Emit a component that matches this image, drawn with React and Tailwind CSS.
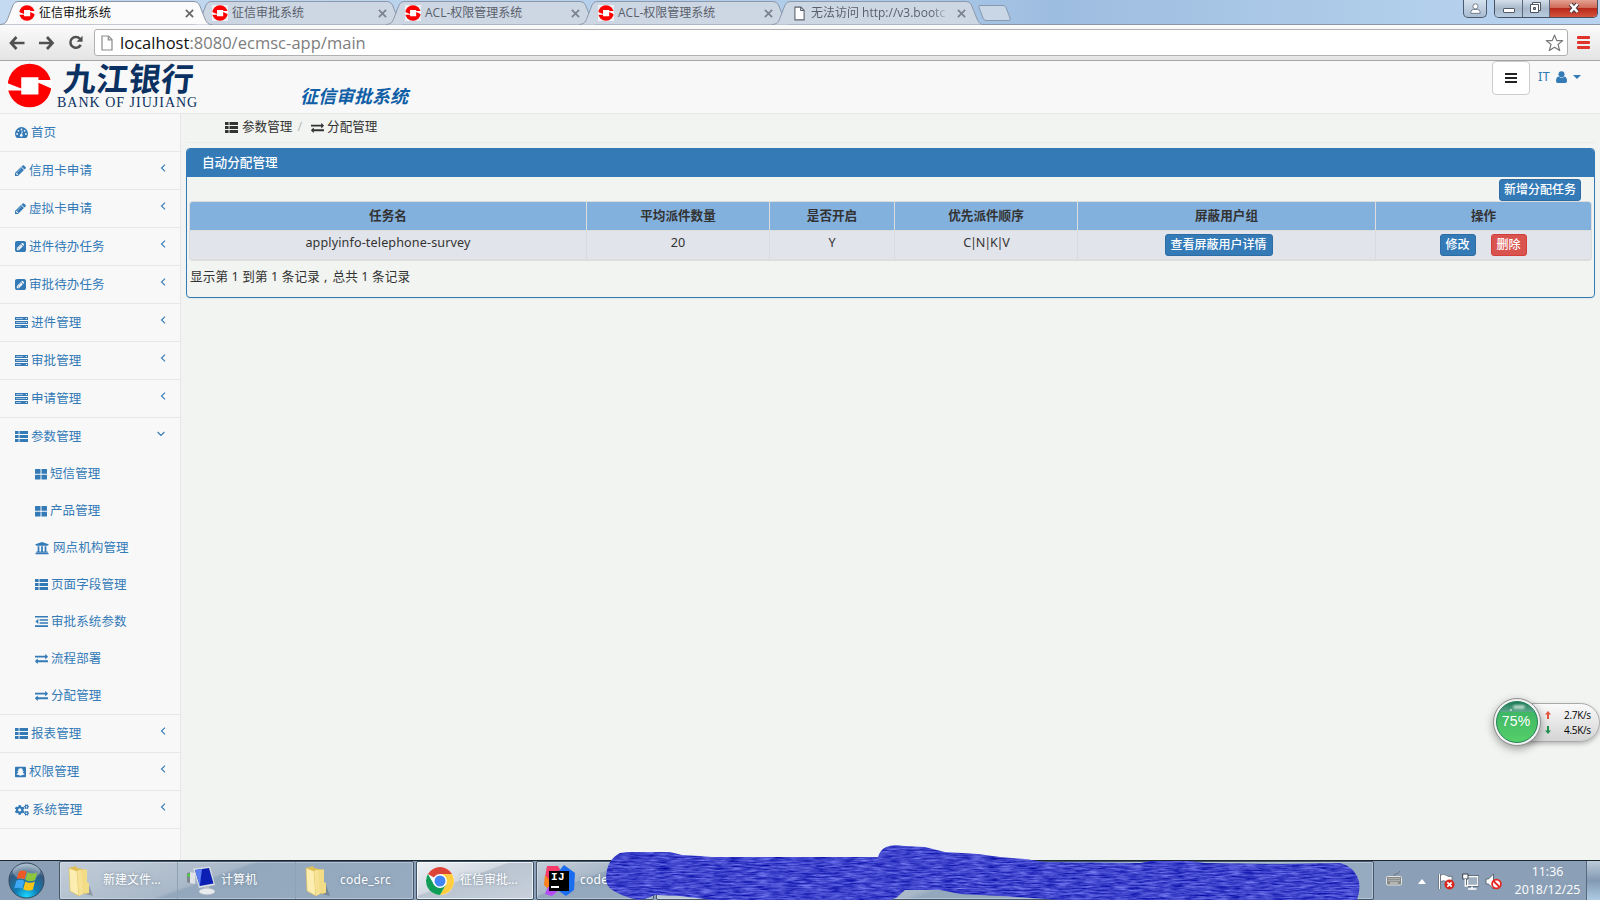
import React from "react";
import { FaUniversity, FaSnapchatSquare, FaCogs } from "react-icons/fa";

const cjk = "font-['Noto_Sans','Noto_Sans_CJK_SC',sans-serif]";

function Emblem({ className }) {
  return (
    <svg viewBox="0 0 134 136" className={className}>
      <circle cx="67" cy="68" r="66" fill="#f00" />
      <path d="M42 43H94V51H136V78L94 60V95H42V83H-2V60L42 77Z" fill="#fff" />
    </svg>
  );
}

/* ---------- icons ---------- */
function Glyph({ d, box = "0 0 1792 1792", className }) {
  return (
    <svg viewBox={box} className={className} fill="currentColor">
      <path d={d} />
    </svg>
  );
}
const PENCIL =
  "M491 1536l91-91-235-235-91 91v107h128v128h107zm523-928q0-22-22-22-10 0-17 7l-542 542q-7 7-7 17 0 22 22 22 10 0 17-7l542-542q7-7 7-17zm-54-192l416 416-832 832h-416v-416zm683 96q0 53-37 90l-166 166-416-416 166-165q36-38 90-38 53 0 91 38l235 234q37 39 37 91z";
const PENCIL_SQ =
  "M404 1108l152 152-52 52h-56v-96h-96v-56zm414-390q14 13-3 30l-291 291q-17 17-30 3-14-13 3-30l291-291q17-17 30-3zm-274 690l544-544-288-288-544 544v288h288zm608-608l92-92q28-28 28-68t-28-68l-152-152q-28-28-68-28t-68 28l-92 92zm384-384v960q0 119-84.5 203.5t-203.5 84.5h-960q-119 0-203.5-84.5t-84.5-203.5v-960q0-119 84.5-203.5t203.5-84.5h960q119 0 203.5 84.5t84.5 203.5z";
const EXCHANGE =
  "M1792 1184v192q0 13-9.500 22.500t-22.500 9.500h-1376v192q0 13-9.500 22.500t-22.500 9.500q-12 0-24-10l-319-320q-9-9-9-22 0-14 9-23l320-320q9-9 23-9 13 0 22.500 9.500t9.500 22.500v192h1376q13 0 22.500 9.500t9.500 22.500zm0-544q0 14-9 23l-320 320q-9 9-23 9-13 0-22.500-9.500t-9.500-22.500v-192h-1376q-13 0-22.500-9.500t-9.500-22.500v-192q0-13 9.500-22.500t22.500-9.500h1376v-192q0-14 9-23t23-9q12 0 24 10l319 319q9 9 9 23z";

function Icon({ name }) {
  const s = "block h-[13px] w-[13px] shrink-0";
  switch (name) {
    case "dash":
      return (
        <svg viewBox="0 0 13 13" className={s}>
          <path d="M1.700 12A6.500 6.500 0 1 1 11.300 12Z" fill="currentColor" />
          <g fill="#f8f8f8">
            <circle cx="2.100" cy="8" r=".9" />
            <circle cx="3.400" cy="4.800" r=".9" />
            <circle cx="6.500" cy="3.500" r=".9" />
            <circle cx="9.600" cy="4.800" r=".9" />
            <circle cx="10.900" cy="8" r=".9" />
            <circle cx="6.300" cy="9.400" r="1.400" />
            <path d="M6 8.500L6.900 5L7.700 5.200L6.900 9Z" />
          </g>
        </svg>
      );
    case "pencil":
      return <Glyph d={PENCIL} box="128 128 1536 1536" className="block h-[11px] w-[11px] shrink-0" />;
    case "pencilsq":
      return <Glyph d={PENCIL_SQ} box="0 128 1536 1536" className="block h-[11px] w-[11px] shrink-0" />;
    case "server":
      return (
        <svg viewBox="0 0 13 13" className={s} fill="currentColor">
          <path d="M0 1h13v3H0zM0 5h13v3H0zM0 9h13v3H0z" />
          <g fill="#f8f8f8">
            <path d="M1 2h7v1H1zM1 6h9v1H1zM1 10h5v1H1z" opacity=".55" />
            <rect x="10.700" y="2" width="1.200" height="1" />
            <rect x="10.700" y="6" width="1.200" height="1" />
            <rect x="10.700" y="10" width="1.200" height="1" />
          </g>
        </svg>
      );
    case "thlist":
      return (
        <svg viewBox="0 0 13 13" className={s} fill="currentColor">
          <path d="M0 1h3.600v3.100H0zM4.500 1H13v3.100H4.500zM0 5h3.600v3.100H0zM4.500 5H13v3.100H4.500zM0 9h3.600v3H0zM4.500 9H13v3H4.500z" />
        </svg>
      );
    case "thlarge":
      return (
        <svg viewBox="0 0 12 12" className="block h-3 w-3 shrink-0" fill="currentColor">
          <rect y="1" width="5.500" height="4.700" rx=".5" />
          <rect x="6.500" y="1" width="5.500" height="4.700" rx=".5" />
          <rect y="6.700" width="5.500" height="4.700" rx=".5" />
          <rect x="6.500" y="6.700" width="5.500" height="4.700" rx=".5" />
        </svg>
      );
    case "bank":
      return <FaUniversity className="block h-[14px] w-[14px] shrink-0" />;
    case "outdent":
      return (
        <svg viewBox="0 0 13 13" className={s} fill="currentColor">
          <path d="M0 1h13v1.600H0zM4.600 4.200H13v1.500H4.600zM4.600 7.200H13v1.500H4.600zM0 10.300h13v1.600H0zM3.300 3.700v5.400L.4 6.400z" />
        </svg>
      );
    case "exchange":
      return <Glyph d={EXCHANGE} className={s} />;
    case "snap":
      return <FaSnapchatSquare className="block h-[12px] w-[11px] shrink-0" preserveAspectRatio="none" />;
    case "cogs":
      return <FaCogs className="block h-[14px] w-[14px] shrink-0" />;
    default:
      return null;
  }
}

/* ---------- browser chrome ---------- */
function PageIcon({ className }) {
  return (
    <svg viewBox="0 0 12 16" className={className} fill="#fff" stroke="currentColor" strokeWidth="1.200">
      <path d="M1 1H7.500L11 4.500V15H1Z" />
      <path d="M7.300 1V4.800H11" fill="none" />
    </svg>
  );
}

function Tab({ title, active, page, cut }) {
  return (
    <div className={"relative h-6 w-[193px] shrink-0 " + (active ? "z-10" : "")}>
      <svg viewBox="0 0 213 25" className="absolute left-0 top-0 h-[25px] w-[213px]">
        <path
          d="M0 24.500C5 24 6 23 8 18L13 5Q14.500 1.500 18 1.500H194Q198 1.500 199.500 5L205 19C207 23 208 24.500 212 24.500"
          fill={active ? "#fbfbfb" : "#cdd7e4"}
          stroke={active ? "#8c97a6" : "#8b99ab"}
          strokeWidth="1"
        />
      </svg>
      <div className="relative flex h-6 items-center pl-[19px] pt-[2px]">
        {page ? (
          <PageIcon className="ml-[3px] mr-[2px] h-[15px] w-[11px] shrink-0 text-[#5c6370]" />
        ) : (
          <span className={active ? "flex h-4 w-4 shrink-0" : "flex h-4 w-4 shrink-0 bg-[#edf1f6]"}>
            <Emblem className="h-4 w-4" />
          </span>
        )}
        <span
          className={
            "ml-[4px] h-5 w-[139px] shrink-0 whitespace-nowrap font-['Open_Sans','Noto_Sans_CJK_SC',sans-serif] text-[12px] leading-5 " +
            (active ? "text-[#111]" : "text-[#59606b]") +
            (cut ? " [mask-image:linear-gradient(90deg,#000_120px,transparent_139px)]" : "")
          }
        >
          {title}
        </span>
        <svg viewBox="0 0 10 10" className="ml-[7px] h-[9px] w-[9px] shrink-0" stroke={active ? "#666" : "#7a818b"} strokeWidth="1.900">
          <path d="M1 1L9 9M9 1L1 9" />
        </svg>
      </div>
    </div>
  );
}

function Browser() {
  return (
    <>
      <div className="flex h-6 bg-[linear-gradient(90deg,#c4daf1,#aecbe9_55%,#9dbde0_66%,#b3cfeb_90%,#b9d4f0)]">
        <Tab title="征信审批系统" active />
        <Tab title="征信审批系统" />
        <Tab title="ACL-权限管理系统" />
        <Tab title="ACL-权限管理系统" />
        <Tab title="无法访问 http://v3.bootc" page cut />
        <svg viewBox="0 0 34 24" className="ml-[13px] h-6 w-[34px]">
          <path d="M2 5.500H25Q27 5.500 28 7.500L32 18Q33 20.500 31 20.500H8Q6 20.500 5 18L1 7.500Q.3 5.500 2 5.500Z" fill="#c9d6e6" stroke="#8799b1" />
        </svg>
        <div className="ml-auto flex h-[18px] pr-[2px]">
          <div className="mr-[7px] flex w-[24px] items-center justify-center rounded-b-[5px] border border-t-0 border-[#4c5a6c] bg-linear-to-b from-[#d5e1ee] to-[#a8bbd1]">
            <svg viewBox="0 0 12 12" className="h-[11px] w-[11px]" fill="#fff" stroke="#6b7686">
              <path d="M1 11.300V9.500Q1.500 7 4 7H8Q10.500 7 11 9.500V11.300Z" />
              <circle cx="6" cy="3.700" r="2.800" />
            </svg>
          </div>
          <div className="flex overflow-hidden rounded-b-[5px] border border-t-0 border-[#46505f]">
            <div className="flex w-[28px] items-end justify-center border-r border-[#5b6779] bg-linear-to-b from-[#d3dfeb] via-[#a9b9cb] to-[#b7cbe0] pb-1">
              <div className="h-[5px] w-3 rounded-[1px] border border-[#535b68] bg-white" />
            </div>
            <div className="flex w-[27px] items-center justify-center border-r border-[#5b6779] bg-linear-to-b from-[#d3dfeb] via-[#a9b9cb] to-[#b7cbe0] pb-[2px] pr-[2px]">
              <svg viewBox="0 0 13 13" className="h-[13px] w-[13px]" fill="#fff" stroke="#4d5562">
                <path d="M3.500 1.500H11.500V9.500H3.500Z" />
                <path d="M1.500 3.500H9.500V11.500H1.500Z" />
                <path d="M4.500 6.500H6.500V8.500H4.500Z" fill="#8fa0b5" />
              </svg>
            </div>
            <div className="flex w-[47px] items-center justify-center bg-[linear-gradient(180deg,#e3a193,#d06a58_45%,#b9281a_50%,#d4553c_100%)] pb-[2px]">
              <svg viewBox="0 0 14 12" className="h-[12px] w-[14px]">
                <path d="M3.500 2L10.500 10M10.500 2L3.500 10" stroke="#4e3a44" strokeWidth="4.600" />
                <path d="M3.500 2L10.500 10M10.500 2L3.500 10" stroke="#fff" strokeWidth="2.600" />
              </svg>
            </div>
          </div>
        </div>
      </div>
      <div className="flex h-[37px] items-center border-b border-t border-b-[#a5a5a5] border-t-[#8c97a6] bg-linear-to-b from-[#fbfbfb] to-[#e4e4e4] pl-[9px]">
        <svg viewBox="0 0 16 14" className="h-[14px] w-4" fill="none" stroke="#505050" strokeWidth="2.700">
          <path d="M15.500 7H2.500M7.500 1L2 7L7.500 13" />
        </svg>
        <svg viewBox="0 0 16 14" className="ml-[14px] h-[14px] w-4" fill="none" stroke="#505050" strokeWidth="2.700">
          <path d="M0 7H13M8 1L13.500 7L8 13" />
        </svg>
        <svg viewBox="0 0 16 16" className="ml-[13px] h-[15px] w-4" fill="none" stroke="#505050" strokeWidth="2.700">
          <path d="M13 10.500A5.800 5.800 0 1 1 12.200 4" />
          <path d="M15 .8V7.300H8.500Z" fill="#505050" stroke="none" />
        </svg>
        <div className="ml-[10px] flex h-[27px] w-[1474px] items-center rounded-[3px] border border-[#b0b0b0] bg-white pl-[6px] pr-[3px]">
          <PageIcon className="h-[16px] w-[12px] text-[#8b8b8b]" />
          <span className="ml-[7px] font-['Open_Sans',sans-serif] text-[16.500px] leading-6 tracking-[0.03px] text-[#7d7d7d]">
            <span className="text-[#111]">localhost</span>:8080/ecmsc-app/main
          </span>
          <svg viewBox="0 0 20 19" className="ml-auto h-[18px] w-[19px]" fill="#fff" stroke="#777" strokeWidth="1.300" strokeLinejoin="round">
            <path d="M10 1.200L12.400 7H18.600L13.700 11L15.500 17.500L10 13.900L4.500 17.500L6.300 11L1.400 7H7.600Z" />
          </svg>
        </div>
        <div className="ml-[9px] flex w-[13px] flex-col gap-[2px]">
          <i className="h-[3px] rounded-[1px] bg-[#e0332b]" />
          <i className="h-[3px] rounded-[1px] bg-[#e0332b]" />
          <i className="h-[3px] rounded-[1px] bg-[#e0332b]" />
        </div>
      </div>
    </>
  );
}

/* ---------- page ---------- */
function PageHeader() {
  return (
    <header className="flex h-[53px] shrink-0 border-b border-[#e7e7e7] bg-[#f8f8f8] pl-[7px]">
      <Emblem className="mt-[2px] h-[45px] w-[45px]" />
      <div className="ml-[5px] flex w-[150px] flex-col text-[#0a3161]">
        <span className="ml-[7px] mt-[-2px] h-[36px] -skew-x-6 whitespace-nowrap font-['Noto_Sans_CJK_SC',sans-serif] text-[32.500px] font-bold leading-[36px]">
          九江银行
        </span>
        <span className="mt-px h-[14px] whitespace-nowrap font-['Liberation_Serif',serif] text-[14px] leading-[14px] tracking-[1px]">
          BANK OF JIUJIANG
        </span>
      </div>
      <h1 className="ml-[93px] mt-[23px] whitespace-nowrap text-[18px] font-bold italic leading-6 text-[#0f5ea6]">征信审批系统</h1>
      <div className="ml-auto flex">
        <button className="flex h-[34px] w-[38px] items-center justify-center rounded-[4px] border border-[#ccc] bg-white">
          <svg viewBox="0 0 12 10" className="h-[10px] w-[12px]" fill="#222">
            <path d="M0 0h12v2H0zM0 4h12v2H0zM0 8h12v2H0z" />
          </svg>
        </button>
        <div className="ml-[8px] mr-[19px] flex h-[31px] items-center text-[13px] text-[#337ab7]">
          <span className="w-[13px]">IT</span>
          <svg viewBox="0 0 11 12" className="ml-[5px] h-[12px] w-[11px]" fill="currentColor">
            <circle cx="5.500" cy="3.200" r="3" />
            <path d="M2.600 5.600Q5.500 8 8.400 5.600Q11 6.400 11 10Q11 12 9.200 12H1.800Q0 12 0 10Q0 6.400 2.600 5.600Z" />
          </svg>
          <svg viewBox="0 0 8 4" className="ml-[6px] h-1 w-2" fill="currentColor">
            <path d="M0 0H8L4 4Z" />
          </svg>
        </div>
      </div>
    </header>
  );
}

const TOP = [
  ["dash", "首页", 0],
  ["pencil", "信用卡申请", 1],
  ["pencil", "虚拟卡申请", 1],
  ["pencilsq", "进件待办任务", 1],
  ["pencilsq", "审批待办任务", 1],
  ["server", "进件管理", 1],
  ["server", "审批管理", 1],
  ["server", "申请管理", 1],
];
const SUB = [
  ["thlarge", "短信管理"],
  ["thlarge", "产品管理"],
  ["bank", "网点机构管理"],
  ["thlist", "页面字段管理"],
  ["outdent", "审批系统参数"],
  ["exchange", "流程部署"],
  ["exchange", "分配管理"],
];
const BOTTOM = [
  ["thlist", "报表管理", 1],
  ["snap", "权限管理", 1],
  ["cogs", "系统管理", 1],
];

function NavRow({ icon, label, arrow, open }) {
  return (
    <div className="flex h-[37px] items-center pl-[15px] pr-[13px]">
      <Icon name={icon} />
      <span className="ml-[3px]">{label}</span>
      {arrow ? (
        <svg
          viewBox="0 0 8 8"
          className={"ml-auto mb-[6px] h-2 w-2 " + (open ? "mr-[2px] -rotate-90" : "")}
          fill="none"
          stroke="currentColor"
          strokeWidth="1.100"
        >
          <path d="M6 .6L2.500 4L6 7.400" />
        </svg>
      ) : null}
    </div>
  );
}

function Sidebar() {
  return (
    <nav className="h-full w-[181px] shrink-0 border-r border-[#e7e7e7] bg-[#f8f8f8] text-[12.500px] leading-5 tracking-[0.1px] text-[#337ab7]">
      {TOP.map(([i, l, a]) => (
        <div key={l} className="border-b border-[#e7e7e7]">
          <NavRow icon={i} label={l} arrow={a} />
        </div>
      ))}
      <div className="border-b border-[#e7e7e7]">
        <NavRow icon="thlist" label="参数管理" arrow open />
        {SUB.map(([i, l]) => (
          <div key={l} className="flex h-[37px] items-center pl-[35px]">
            <Icon name={i} />
            <span className={i === "bank" ? "ml-[4px]" : "ml-[3px]"}>{l}</span>
          </div>
        ))}
      </div>
      {BOTTOM.map(([i, l, a]) => (
        <div key={l} className="border-b border-[#e7e7e7]">
          <NavRow icon={i} label={l} arrow={a} />
        </div>
      ))}
    </nav>
  );
}

function Btn({ children, className }) {
  return (
    <button className={"flex h-[22px] items-center justify-center whitespace-nowrap rounded-[3px] border text-[12px] font-medium leading-[18px] text-white " + className}>
      {children}
    </button>
  );
}

function Main() {
  const cols = "grid grid-cols-[396px_183px_125px_183px_298px_1fr]";
  const th = "flex items-center justify-center border-l border-[#ddd] first:border-l-0";
  const td = "flex justify-center border-l border-[#d9dade] pt-[2px] first:border-l-0";
  return (
    <main className="min-w-0 flex-1 pl-[5px] pr-[5px] text-[12.600px] leading-5 text-[#333]">
      <div className="flex h-[29px] items-center border-b border-[#eaedea] pb-[2px] pl-[39px]">
        <Icon name="thlist" />
        <span className="ml-[4px]">参数管理</span>
        <span className="ml-[5px] text-[#bbb]">/</span>
        <span className="ml-[9px] flex items-center">
          <Icon name="exchange" />
          <span className="ml-[3px]">分配管理</span>
        </span>
      </div>
      <section className="mt-[5px] h-[150px] overflow-hidden rounded-[4px] border border-[#337ab7] shadow-[0_1px_1px_rgba(0,0,0,0.05)]">
        <div className="flex h-[28px] items-center bg-[#337ab7] pb-[1px] pl-[15px] font-medium text-white">自动分配管理</div>
        <div className="flex justify-end pr-[13px] pt-[2px]">
          <Btn className="w-[82px] border-[#2e6da4] bg-[#337ab7]">新增分配任务</Btn>
        </div>
        <div className="ml-[2px] mr-[2px] h-[60px] overflow-hidden rounded-[4px] border border-b-2 border-[#ddd] bg-[#e1e4ea]">
          <div className={cols + " h-[28px] bg-[#83b1de] font-bold"}>
            <span className={th}>任务名</span>
            <span className={th}>平均派件数量</span>
            <span className={th}>是否开启</span>
            <span className={th}>优先派件顺序</span>
            <span className={th}>屏蔽用户组</span>
            <span className={th}>操作</span>
          </div>
          <div className={cols + " h-[30px] border-t border-[#ddd]"}>
            <span className={td + " tracking-[0.12px]"}>applyinfo-telephone-survey</span>
            <span className={td}>20</span>
            <span className={td}>Y</span>
            <span className={td + " tracking-[-1.2px]"}>C|N|K|V</span>
            <span className={td + " items-start !pt-[3px]"}>
              <Btn className="mr-[16px] w-[108px] border-[#2e6da4] bg-[#337ab7]">查看屏蔽用户详情</Btn>
            </span>
            <span className={td + " items-start gap-[15px] !pt-[3px]"}>
              <Btn className="w-[36px] border-[#2e6da4] bg-[#337ab7]">修改</Btn>
              <Btn className="mr-px w-[36px] border-[#d43f3a] bg-[#d9534f]">删除</Btn>
            </span>
          </div>
        </div>
        <p className="mt-[6px] h-5 pl-[3px] tracking-[0.12px]">
          显示第 1 到第 1 条记录<span className="inline-block w-[12.600px] pl-[4px] leading-none">,</span>总共 1 条记录
        </p>
      </section>
    </main>
  );
}

/* ---------- floating speed meter ---------- */
function Meter() {
  return (
    <div className="absolute left-[1493px] top-[698px] flex h-[48px] w-[107px] items-center">
      <div className="relative z-10 h-[48px] w-[48px] shrink-0 rounded-full border border-[#8f8f8f] bg-[#f2f2f2] p-[2px] shadow-[0_3px_8px_rgba(0,0,0,0.35)]">
        <div className="relative flex h-full w-full items-center justify-center overflow-hidden rounded-full border border-[#23805a] bg-[linear-gradient(180deg,#1b7a56_0,#5fa98d_25%,#3fb765_26%,#55d068_100%)] pb-[2px] pr-[2px] font-['Liberation_Sans',sans-serif] text-[14px] tracking-[0.2px] text-white">
          75%
          <i className="absolute left-[16px] top-[3px] h-[4px] w-[12px] rounded-full bg-white/60 blur-[1px]" />
          <i className="absolute left-[13px] top-[7px] h-[2px] w-[2px] rounded-full bg-white/70" />
        </div>
      </div>
      <div className="-ml-6 flex h-[39px] w-[83px] flex-col justify-center rounded-r-full border border-[#a9a9a9] bg-linear-to-b from-[#fafafa] to-[#d4d4d4] pl-[27px] pt-px font-['Open_Sans',sans-serif] text-[10px] font-medium leading-[15px] text-black shadow-[0_2px_4px_rgba(0,0,0,0.25)]">
        <div className="flex items-center">
          <svg viewBox="0 0 6 8" className="h-2 w-[6px]" fill="#e2553f">
            <path d="M3 0L6 3.500H4V8H2V3.500H0Z" />
          </svg>
          <span className="ml-[13px] tracking-[-0.3px]">2.7K/s</span>
        </div>
        <div className="flex items-center">
          <svg viewBox="0 0 6 8" className="h-2 w-[6px]" fill="#219150">
            <path d="M3 8L6 4.500H4V0H2V4.500H0Z" />
          </svg>
          <span className="ml-[13px] tracking-[-0.3px]">4.5K/s</span>
        </div>
      </div>
    </div>
  );
}

/* ---------- taskbar ---------- */
function Folder() {
  return (
    <svg viewBox="0 0 26 32" className="h-8 w-[26px]">
      <path d="M14 28L26 31L22 20Z" fill="#000" opacity=".2" />
      <path d="M2 3L9 1L10 3L20 5V29L10 27Z" fill="#e2bf55" />
      <path d="M11 5L20 4.500V17L22 18V28L12 29Z" fill="#f3dc86" />
      <path d="M2 3L10 6L12 31L3 26Z" fill="#fbeeb0" stroke="#d9b956" strokeWidth=".6" />
      <path d="M10 6L14 5L16 29L12 31Z" fill="#f6e294" />
    </svg>
  );
}
function Computer() {
  return (
    <svg viewBox="0 0 32 30" className="h-[30px] w-8">
      <path d="M2 7L6 6V17L2 16.500Z" fill="#7f868f" />
      <path d="M5 6L10 7V18L5 17Z" fill="#dfe3e7" />
      <path d="M2.500 8L5 7.500V10.500L2.500 11Z" fill="#4bd03d" />
      <path d="M8 2.500L25 .5L30 19L14 22Z" fill="#d9dde2" />
      <path d="M10 4L24 2L28.500 17.500L14.800 20Z" fill="#0c1fb4" />
      <path d="M10 4L17 3L14.800 20Z" fill="#5b7fee" />
      <path d="M19 21L24 20L25 25H19Z" fill="#b9bfc6" />
      <ellipse cx="22" cy="25.500" rx="8" ry="3.300" fill="#e8ebee" stroke="#a9b0b8" strokeWidth=".5" />
    </svg>
  );
}
function Chrome() {
  return (
    <svg viewBox="0 0 30 30" className="h-[30px] w-[30px]">
      <circle cx="15" cy="15" r="14" fill="#fff" />
      <path d="M15 15L2.880 8A14 14 0 0 1 27.120 8H15Z" fill="#db4437" />
      <path d="M27.120 8A14 14 0 0 1 15 29L21 18.500L15 8Z" fill="#ffcd40" />
      <path d="M2.880 8A14 14 0 0 0 15 29L21 18.500L9 18.500Z" fill="#0f9d58" />
      <circle cx="15" cy="15" r="7" fill="#fff" />
      <circle cx="15" cy="15" r="5.500" fill="#4285f4" />
    </svg>
  );
}
function Idea() {
  return (
    <div className="relative h-8 w-[32px]">
      <svg viewBox="0 0 32 32" className="absolute inset-0 h-8 w-8">
        <path d="M3 1H14L18 8L8 22L1 12Z" fill="#f83a68" />
        <path d="M1 10L10 20L4 24L0 20Z" fill="#fc801d" />
        <path d="M4 22L16 24L8 31L1 29Z" fill="#b74af7" />
        <path d="M15 6L20 0L31 8L30 25L22 31L12 24Z" fill="#1a6df0" />
      </svg>
      <div className="absolute left-[5px] top-[6px] flex h-[20px] w-[20px] flex-col bg-black pl-[2px] font-['Liberation_Mono',monospace] text-[11px] font-bold leading-[13px] text-white">
        IJ
        <i className="mt-[2px] h-[2px] w-[8px] bg-white" />
      </div>
    </div>
  );
}
function Orb() {
  return (
    <svg viewBox="0 0 38 38" className="h-[37px] w-[37px]">
      <defs>
        <radialGradient id="orb" cx=".5" cy=".95" r=".95">
          <stop offset="0" stopColor="#19d8ff" />
          <stop offset=".35" stopColor="#0f7db5" />
          <stop offset=".75" stopColor="#33597d" />
          <stop offset="1" stopColor="#9db6c9" />
        </radialGradient>
      </defs>
      <circle cx="19" cy="19" r="18" fill="url(#orb)" stroke="#33485c" />
      <ellipse cx="19" cy="10" rx="14" ry="8" fill="#fff" opacity=".28" />
      <path d="M11 10Q15 7.500 19 10L17 18Q13.500 15.500 9 17.500Z" fill="#ee5a24" />
      <path d="M20 10.500Q25 13 30 10.500L28 18.500Q23 21 18 18.500Z" fill="#8cc63f" />
      <path d="M8.700 19Q13 17 16.700 19.500L14.700 27.500Q11 25.500 6.500 27Z" fill="#3fa9f5" />
      <path d="M17.700 20Q22.500 22.500 27.600 20L25.500 28.500Q20 30.500 15.700 28Z" fill="#fcc419" />
    </svg>
  );
}

const GLASS = "bg-[linear-gradient(160deg,#c3ced9_0,#a9b8c8_42%,#93a8bd_44%,#96abc0_100%)]";

function Task({ icon, label, className }) {
  return (
    <div className={"flex h-full items-center text-[12px] leading-5 text-white " + className}>
      {icon}
      <span className="mb-[2px] whitespace-nowrap [text-shadow:0_0_3px_rgba(60,80,100,0.5)]">{label}</span>
    </div>
  );
}

function Taskbar() {
  return (
    <footer className="relative flex h-10 shrink-0 border-t border-[#1c2830] bg-[#8ba0b7]">
      <div className="flex h-full w-[59px] items-center pl-[8px]">
        <Orb />
      </div>
      <div className={"flex h-[39px] w-[355px] rounded-[2px] border border-[#43566a] shadow-[inset_0_0_0_1px_rgba(255,255,255,0.3)] " + GLASS}>
        <Task icon={<Folder />} label="新建文件..." className="w-[118px] gap-[10px] border-r border-[#8fa1b4] pl-[7px]" />
        <Task icon={<Computer />} label="计算机" className="w-[118px] gap-[4px] border-r border-[#8fa1b4] pl-[7px]" />
        <Task icon={<Folder />} label="code_src" className="w-[117px] gap-[10px] pl-[8px] tracking-[0.3px]" />
      </div>
      <Task
        icon={<Chrome />}
        label="征信审批..."
        className="ml-[2px] w-[118px] gap-[5px] rounded-[2px] border border-[#3d5064] bg-[linear-gradient(160deg,#edf1f5_0,#d3dae2_42%,#b9c4d0_44%,#c8d1dc_100%)] pl-[8px] shadow-[inset_0_0_0_1px_rgba(255,255,255,0.7)]"
      />
      <Task icon={<Idea />} label="code" className={"ml-[2px] w-[118px] gap-[4px] rounded-[2px] border border-[#43566a] pl-[7px] tracking-[0.3px] shadow-[inset_0_0_0_1px_rgba(255,255,255,0.3)] " + GLASS} />
      <div className={"ml-[2px] h-[39px] flex-1 rounded-[2px] border border-[#43566a] shadow-[inset_0_0_0_1px_rgba(255,255,255,0.3)] " + GLASS} />
      <div className="flex h-full w-[226px] items-center bg-[#8ba0b7] text-white">
        <svg viewBox="0 0 17 16" className="mb-[5px] ml-[12px] h-4 w-[17px]" fill="none" stroke="#e4e2de" strokeWidth="1">
          <path d="M8 6Q8 4 10 4T14 1" stroke="#70757b" />
          <rect x=".5" y="6.500" width="15" height="8.500" rx="1" fill="#868888" />
          <path d="M2.500 8.700h11M2.500 10.700h11" strokeDasharray="1 1" />
          <path d="M4 13h8" />
        </svg>
        <svg viewBox="0 0 8 5" className="ml-[15px] mt-[2px] h-[5px] w-2" fill="#fff">
          <path d="M0 5L4 0L8 5Z" />
        </svg>
        <svg viewBox="0 0 17 17" className="ml-[12px] mt-[2px] h-[17px] w-[17px]">
          <path d="M1.500 1V16" stroke="#414b57" strokeWidth="2.600" />
          <path d="M1.500 1V16" stroke="#fff" strokeWidth="1.400" />
          <path d="M2.500 2Q6 .5 8.500 2.500T14 3V9Q11 10 8.500 8.500T2.500 8.500Z" fill="#fff" stroke="#515c69" strokeWidth=".7" />
          <circle cx="11.500" cy="11.500" r="5" fill="#d8241c" />
          <path d="M9.300 9.300L13.700 13.700M13.700 9.300L9.300 13.700" stroke="#fff" strokeWidth="1.700" />
        </svg>
        <svg viewBox="0 0 17 17" className="ml-[7px] mt-[2px] h-[17px] w-[17px]" stroke="#333e4b">
          <path d="M5.500 3.500H16V12.500H5.500Z" fill="#9fb0c0" stroke="#fff" strokeWidth="1.500" />
          <path d="M4.500 2.500H16.700V13.500H4.500Z" fill="none" strokeWidth=".6" />
          <path d="M10 13.500V15.500M6 16H14.500" stroke="#fff" strokeWidth="1.500" />
          <path d="M.7 1H6V6H.7Z" fill="#fff" />
          <path d="M3.300 6V13H6" fill="none" stroke="#fff" strokeWidth="1.400" />
        </svg>
        <svg viewBox="0 0 17 17" className="ml-[6px] mt-[2px] h-[17px] w-[17px]">
          <path d="M1 6H3.500L8.500 1V16L3.500 11H1Z" fill="#fff" stroke="#44505e" strokeWidth=".8" />
          <circle cx="11.500" cy="11" r="4.400" fill="#fff" stroke="#e52620" strokeWidth="1.800" />
          <path d="M8.500 8L14.500 14" stroke="#e52620" strokeWidth="1.800" />
        </svg>
        <div className="ml-[11px] flex w-[69px] flex-col whitespace-nowrap text-center font-['Open_Sans',sans-serif] text-[12.400px] leading-[18px]">
          <span>11:36</span>
          <span>2018/12/25</span>
        </div>
        <div className="ml-auto h-full w-[14px] border-l border-[#56697d] bg-linear-to-b from-[#bccbda] via-[#8399b2] to-[#aecbe4]" />
      </div>
    </footer>
  );
}

function Scribble() {
  return (
    <svg viewBox="600 840 770 60" className="pointer-events-none absolute left-[600px] top-[840px] h-[60px] w-[770px]">
      <defs>
        <filter id="streaks" x="0" y="0" width="1" height="1" colorInterpolationFilters="sRGB">
          <feTurbulence type="fractalNoise" baseFrequency="0.07 0.6" numOctaves="3" seed="4" result="n" />
          <feColorMatrix
            in="n"
            type="matrix"
            values="0.6 0 0 0 -0.05  0.6 0 0 0 -0.03  0.4 0 0 0 0.6  0 0 0 0 1"
            result="c"
          />
          <feComposite in="c" in2="SourceGraphic" operator="in" />
        </filter>
      </defs>
      <g filter="url(#streaks)">
        <path
          d="M606 879Q606 860 620 853L628 852H670L682 855L700 856L712 857H878Q880 850 886 847Q893 844 904 846L925 847L945 852L978 854L1000 857L1025 859L1045 862L1140 863L1150 861L1190 861L1205 863L1280 864L1340 863Q1352 866 1357 876Q1362 885 1357 900H1060L1000 896L960 894L940 890H905L896 898L890 900H712L680 896L655 895L645 899L638 900Q620 896 611 889Q606 885 606 879Z"
          fill="#3b42cf"
        />
      </g>
    </svg>
  );
}

export default function App() {
  return (
    <div className={"relative flex h-[900px] w-[1600px] flex-col overflow-hidden bg-[#f1f4f0] " + cjk}>
      <Browser />
      <PageHeader />
      <div className="flex min-h-0 flex-1">
        <Sidebar />
        <Main />
      </div>
      <Taskbar />
      <Scribble />
      <Meter />
    </div>
  );
}
